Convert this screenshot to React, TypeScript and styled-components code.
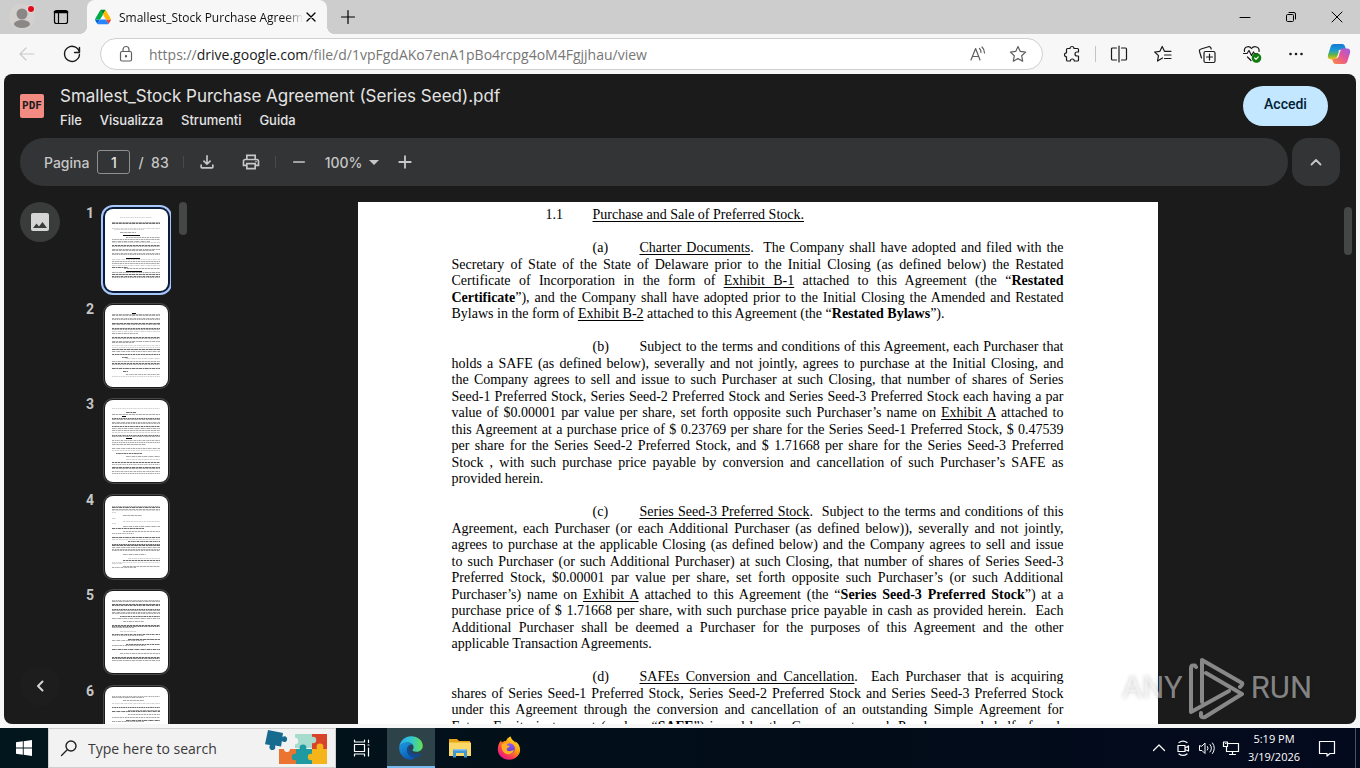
import React from "react";
import styled, { createGlobalStyle, css } from "styled-components";
import { MdOutlineFileDownload, MdOutlinePrint, MdArrowDropDown, MdAdd, MdRemove, MdImage } from "react-icons/md";

const ui = '"Open Sans", "Noto Sans", sans-serif';
const product = 'Inter, Roboto, sans-serif';

const GlobalStyle = createGlobalStyle`
  *, *::before, *::after { box-sizing: border-box; }
  body { margin: 0; background: #f7f7f7; font-family: ${ui}; }
  button { border: 0; padding: 0; background: none; font: inherit; color: inherit; cursor: pointer; }
  a { color: inherit; text-decoration: none; }
`;

const Desktop = styled.div`
  display: flex;
  flex-direction: column;
  height: 100vh;
  overflow: hidden;
  position: relative;
`;

/* ---------- browser chrome ---------- */

const Line = styled.svg`
  display: block;
  flex: none;
  fill: none;
  stroke: currentColor;
  stroke-width: 1.2;
  stroke-linecap: round;
  stroke-linejoin: round;
`;

const TabStrip = styled.header`
  display: flex;
  align-items: stretch;
  height: 34px;
  flex: none;
  background: #cdcdcd;
`;

const StripButton = styled.button<{ $w: number }>`
  display: grid;
  place-items: center;
  width: ${(p) => p.$w}px;
`;

const Tab = styled.div`
  display: flex;
  align-items: center;
  width: 240px;
  margin-left: 10px;
  padding: 0 8px;
  background: #f7f7f7;
  border-radius: 8px 8px 0 0;
  position: relative;
  &::before, &::after {
    content: "";
    position: absolute;
    bottom: 0;
    width: 8px;
    height: 8px;
  }
  &::before { left: -8px; background: radial-gradient(circle at 0 0, transparent 8px, #f7f7f7 8px); }
  &::after { right: -8px; background: radial-gradient(circle at 100% 0, transparent 8px, #f7f7f7 8px); }
`;

const TabTitle = styled.span`
  flex: 1;
  min-width: 0;
  margin-left: 8px;
  overflow: hidden;
  white-space: nowrap;
  font-size: 12px;
  color: #111;
  mask-image: linear-gradient(90deg, #000 90%, transparent);
`;

const WindowButtons = styled.div`
  display: flex;
  margin-left: auto;
`;

const NavBar = styled.nav`
  display: flex;
  align-items: center;
  height: 40px;
  flex: none;
  background: #f7f7f7;
  color: #1a1a1a;
`;

const NavButton = styled.button<{ $w?: number; $dim?: boolean }>`
  display: grid;
  place-items: center;
  width: ${(p) => p.$w ?? 44}px;
  height: 32px;
  color: ${(p) => (p.$dim ? "#c9c9c9" : "inherit")};
`;

const AddressBar = styled.div`
  display: flex;
  align-items: center;
  flex: 1;
  height: 32px;
  margin: 0 6px;
  padding: 0 4px 0 16px;
  border: 1px solid #cfcfcf;
  border-radius: 16px;
  background: #fff;
  color: #5f5f5f;
`;

const Url = styled.a`
  flex: 1;
  margin-left: 14px;
  font-size: 14px;
  color: #767676;
  white-space: nowrap;
  b { font-weight: 400; color: #1a1a1a; }
`;

const Separator = styled.span`
  width: 1px;
  height: 16px;
  background: #c4c4c4;
`;

/* ---------- drive viewer ---------- */

const Viewer = styled.main`
  display: flex;
  flex-direction: column;
  flex: 1;
  min-height: 0;
  margin: 0 4px 4px;
  overflow: hidden;
  border-radius: 8px;
  background: #1b1b1b;
  color: #e3e3e3;
  font-family: ${product};
`;

const ViewerHeader = styled.div`
  display: flex;
  align-items: center;
  height: 64px;
  flex: none;
  padding: 0 28px 0 16px;
`;

const PdfBadge = styled.span`
  display: grid;
  place-items: center;
  width: 24px;
  height: 24px;
  border-radius: 2px;
  background: #f28b82;
  color: #1b1b1b;
  font: 700 11px/24px "DejaVu Sans Mono", monospace;
`;

const TitleBlock = styled.div`
  flex: 1;
  margin-left: 16px;
  padding-top: 4px;
`;

const Title = styled.h1`
  margin: 0;
  font-size: 17px;
  line-height: 24px;
  font-weight: 400;
`;

const Menu = styled.div`
  display: flex;
  gap: 18px;
  height: 24px;
  font-size: 13px;
  font-weight: 500;
  line-height: 24px;
`;

const SignIn = styled.a`
  width: 85px;
  height: 40px;
  border-radius: 20px;
  background: #c2e7ff;
  color: #001d35;
  text-align: center;
  font: 500 14px/37px Roboto, sans-serif;
`;

const ToolRow = styled.div`
  display: flex;
  gap: 4px;
  flex: none;
  padding: 0 16px;
`;

const Tools = styled.div`
  display: flex;
  align-items: center;
  flex: 1;
  height: 48px;
  padding: 0 24px;
  border-radius: 24px;
  background: #333435;
  color: #c7c7c7;
  font-size: 14px;
  font-weight: 500;
`;

const PageField = styled.label`
  display: flex;
  align-items: center;
  gap: 8px;
`;

const PageInput = styled.input`
  width: 33px;
  height: 24px;
  padding: 0;
  border: 1px solid #8e918f;
  border-radius: 3px;
  background: transparent;
  color: #e3e3e3;
  text-align: center;
  font: 500 14px ${product};
`;

const ToolDivider = styled.span`
  width: 1px;
  height: 12px;
  margin: 0 13px 0 14px;
  background: #48494a;
`;

const ToolButton = styled.button<{ $gap?: number }>`
  display: flex;
  align-items: center;
  margin-right: ${(p) => p.$gap ?? 0}px;
`;

const Collapse = styled.button`
  display: grid;
  place-items: center;
  width: 48px;
  height: 48px;
  border-radius: 16px;
  background: #333435;
  color: #c7c7c7;
`;

const Body = styled.div`
  display: flex;
  flex: 1;
  min-height: 0;
  padding-top: 16px;
`;

const Rail = styled.div`
  display: flex;
  flex-direction: column;
  justify-content: space-between;
  width: 56px;
  padding: 0 0 18px 16px;
`;

const RailButton = styled.button<{ $bg: string }>`
  display: grid;
  place-items: center;
  width: 40px;
  height: 40px;
  border-radius: 50%;
  background: ${(p) => p.$bg};
  color: #d5d5d5;
`;

const Thumbs = styled.ol`
  display: grid;
  grid-auto-rows: 96px 95px;
  width: 111px;
  margin: 0;
  padding: 7px 0 0 22px;
  overflow: hidden;
  list-style: none;
`;

const ThumbItem = styled.li`
  display: flex;
  gap: 11px;
`;

const ThumbNumber = styled.span`
  width: 12px;
  text-align: right;
  font: 700 14px/8px Roboto, sans-serif;
  color: #c4c7c5;
`;

const Thumb = styled.button<{ $on: boolean }>`
  width: 63px;
  height: 82px;
  border-radius: 8px;
  overflow: hidden;
  background: #fff;
  ${(p) =>
    p.$on
      ? css`box-shadow: 0 0 0 2px #0a1c3a, 0 0 0 4px #a8c7fa;`
      : css`box-shadow: 0 0 0 1px #1b1b1b, 0 0 0 2px #474747;`}
`;

const ScrollTrack = styled.div<{ $w: number }>`
  width: ${(p) => p.$w}px;
  flex: none;
`;

const ScrollThumb = styled.div<{ $h: number; $top: number }>`
  width: 8px;
  height: ${(p) => p.$h}px;
  margin: ${(p) => p.$top}px auto 0;
  border-radius: 4px;
  background: #454646;
`;

const Canvas = styled.div`
  display: flex;
  justify-content: center;
  flex: 1;
  min-width: 0;
  padding-right: 20px;
  overflow: hidden;
`;

const Sheet = styled.article`
  width: 800px;
  min-height: 100%;
  padding: 4px 94px;
  background: #fff;
  color: #000;
  font: 14px/17px "Liberation Serif", serif;
`;

const Para = styled.p`
  display: grid;
  grid-auto-rows: 17px 16px;
  margin: 0 0 16px;
  u { text-underline-offset: 2px; text-decoration-skip-ink: none; }
`;

const Row = styled.span<{ $last?: boolean }>`
  display: flex;
  white-space: nowrap;
  text-align-last: ${(p) => (p.$last ? "left" : "justify")};
`;

const Marker = styled.span<{ $indent: number }>`
  width: 47px;
  margin-left: ${(p) => p.$indent}px;
  text-align-last: left;
`;

const Words = styled.span`
  flex: 1;
`;

/* ---------- watermark ---------- */

const Watermark = styled.div`
  position: absolute;
  right: 48px;
  bottom: 48px;
  display: flex;
  align-items: center;
  gap: 6px;
  color: rgba(255, 255, 255, 0.48);
  font: 31px/64px Roboto, sans-serif;
  text-shadow: 0 0 4px rgba(0, 0, 0, 0.2);
  pointer-events: none;
`;

/* ---------- taskbar ---------- */

const Taskbar = styled.footer`
  display: flex;
  align-items: stretch;
  height: 40px;
  flex: none;
  background: linear-gradient(90deg, #02161d, #020c18 60%, #030a1e);
  color: #fff;
`;

const Task = styled.button<{ $active?: boolean; $w?: number }>`
  display: grid;
  place-items: center;
  width: ${(p) => p.$w ?? 48}px;
  ${(p) => p.$active && css`background: #2d4249; box-shadow: inset 0 -2px #76b9ed;`}
`;

const Search = styled.label`
  display: flex;
  align-items: center;
  width: 288px;
  padding: 0 6px 0 11px;
  border: 1px solid #cfcfcf;
  background: #f2f2f2;
  color: #222;
`;

const SearchInput = styled.input`
  flex: 1;
  min-width: 0;
  padding: 0 0 0 10px;
  border: 0;
  background: none;
  font: 14px ${ui};
  &::placeholder { color: #3a3a3a; opacity: 1; }
`;

const Tray = styled.div`
  display: flex;
  align-items: center;
  margin-left: auto;
`;

const TrayButton = styled.button<{ $w?: number }>`
  display: grid;
  place-items: center;
  width: ${(p) => p.$w ?? 24}px;
`;

const Clock = styled.time`
  width: 62px;
  text-align: center;
  font-size: 11px;
  line-height: 18px;
`;

const PeekEdge = styled.span`
  width: 5px;
  align-self: stretch;
  margin-left: 6px;
  border-left: 1px solid #4a5061;
`;

/* ---------- data ---------- */

type LineT = React.ReactNode;
interface Clause { id: string; indent: number; open?: boolean; lines: LineT[] }

const clauses: Clause[] = [
  { id: "1.1", indent: 94, lines: [<u>Purchase and Sale of Preferred Stock.</u>] },
  {
    id: "(a)",
    indent: 141,
    lines: [
      <><u>Charter Documents</u>.&nbsp; The Company shall have adopted and filed with the</>,
      "Secretary of State of the State of Delaware prior to the Initial Closing (as defined below) the Restated",
      <>Certificate of Incorporation in the form of <u>Exhibit B-1</u> attached to this Agreement (the “<b>Restated</b></>,
      <><b>Certificate</b>”), and the Company shall have adopted prior to the Initial Closing the Amended and Restated</>,
      <>Bylaws in the form of <u>Exhibit B-2</u> attached to this Agreement (the “<b>Restated Bylaws</b>”).</>,
    ],
  },
  {
    id: "(b)",
    indent: 141,
    lines: [
      "Subject to the terms and conditions of this Agreement, each Purchaser that",
      "holds a SAFE (as defined below), severally and not jointly, agrees to purchase at the Initial Closing, and",
      "the Company agrees to sell and issue to such Purchaser at such Closing, that number of shares of Series",
      "Seed-1 Preferred Stock, Series Seed-2 Preferred Stock and Series Seed-3 Preferred Stock each having a par",
      <>value of $0.00001 par value per share, set forth opposite such Purchaser’s name on <u>Exhibit A</u> attached to</>,
      "this Agreement at a purchase price of $ 0.23769 per share for the Series Seed-1 Preferred Stock, $ 0.47539",
      "per share for the Series Seed-2 Preferred Stock, and $ 1.71668 per share for the Series Seed-3 Preferred",
      "Stock , with such purchase price payable by conversion and cancellation of such Purchaser’s SAFE as",
      "provided herein.",
    ],
  },
  {
    id: "(c)",
    indent: 141,
    lines: [
      <><u>Series Seed-3 Preferred Stock</u>.&nbsp; Subject to the terms and conditions of this</>,
      "Agreement, each Purchaser (or each Additional Purchaser (as defined below)), severally and not jointly,",
      "agrees to purchase at the applicable Closing (as defined below) and the Company agrees to sell and issue",
      "to such Purchaser (or such Additional Purchaser) at such Closing, that number of shares of Series Seed-3",
      "Preferred Stock, $0.00001 par value per share, set forth opposite such Purchaser’s (or such Additional",
      <>Purchaser’s) name on <u>Exhibit A</u> attached to this Agreement (the “<b>Series Seed-3 Preferred Stock</b>”) at a</>,
      <>purchase price of $ 1.71668 per share, with such purchase price payable in cash as provided herein.&nbsp; Each</>,
      "Additional Purchaser shall be deemed a Purchaser for the purposes of this Agreement and the other",
      "applicable Transaction Agreements.",
    ],
  },
  {
    id: "(d)",
    indent: 141,
    open: true,
    lines: [
      <><u>SAFEs Conversion and Cancellation</u>.&nbsp; Each Purchaser that is acquiring</>,
      "shares of Series Seed-1 Preferred Stock, Series Seed-2 Preferred Stock and Series Seed-3 Preferred Stock",
      "under this Agreement through the conversion and cancellation of an outstanding Simple Agreement for",
      <>Future Equity instrument (each, a “<b>SAFE</b>”) issued by the Company to such Purchaser, on behalf of such</>,
    ],
  },
];

/* Each entry: y, x start, x end, weight (1 faint .. 4 solid) */
type Stroke = [number, number, number, number];
const thumbPages: Stroke[][] = [
  [[8,16,48,1],[13,8,56,2],[14,8,56,3],[19,8,56,1],[20,10,40,1],[23,16,32,2],[26,19,36,4],[28,22,56,2],[30,8,56,2],[32,8,46,2],[33,8,56,1],[36,8,56,3],[37,8,56,2],[40,8,56,2],[41,8,50,2],[44,8,56,2],[45,8,56,2],[49,22,36,4],[50,8,56,1],[52,8,56,2],[54,8,56,2],[56,8,56,1],[58,8,24,3],[59,20,56,2],[62,22,38,4],[63,8,56,2],[65,8,56,3],[67,8,56,3],[68,8,56,2]],
  [[8,28,32,4],[9,8,56,2],[10,8,56,2],[13,8,56,2],[14,8,56,2],[18,8,56,3],[19,8,56,2],[23,8,56,3],[24,8,56,2],[26,8,56,1],[28,8,34,2],[32,8,56,3],[33,8,56,2],[36,8,56,2],[37,8,30,2],[40,8,56,1],[42,8,56,1],[44,8,56,3],[46,8,56,2],[49,8,56,3],[52,18,24,3],[53,22,56,1],[56,8,56,2],[58,8,56,3],[59,8,56,2],[63,8,56,3],[66,19,24,3],[69,22,56,2],[71,8,56,1]],
  [[8,8,56,1],[12,22,32,3],[14,8,56,2],[16,18,22,4],[18,8,56,3],[19,8,56,2],[22,8,56,2],[23,8,56,2],[26,8,56,3],[28,8,56,2],[30,8,56,2],[32,8,56,1],[35,8,56,3],[36,8,56,2],[38,22,28,4],[40,8,56,2],[42,8,56,2],[44,8,42,2],[48,8,56,2],[50,8,56,1],[53,12,38,3],[56,22,56,2],[59,22,56,1],[62,8,56,3],[64,8,56,2],[67,8,56,3],[68,8,56,2],[71,8,56,2],[73,8,56,2]],
  [[10,8,56,2],[11,8,56,3],[13,8,56,2],[14,8,56,1],[16,8,12,1],[19,19,38,2],[22,8,12,1],[25,19,56,1],[27,8,12,1],[30,19,56,2],[32,8,40,3],[35,19,56,2],[37,8,30,2],[41,8,56,3],[43,8,56,1],[45,24,56,3],[48,8,56,3],[49,8,56,3],[51,8,56,2],[53,8,56,2],[54,8,56,2],[58,19,42,2],[62,24,56,1],[64,19,56,3],[66,8,56,1],[67,8,18,1],[70,19,56,2],[71,8,32,2]],
  [[9,8,56,2],[10,8,56,2],[13,8,56,3],[14,8,56,3],[18,8,56,3],[19,8,56,2],[21,8,56,2],[22,8,56,2],[25,16,56,3],[27,8,56,2],[30,19,40,2],[34,8,56,3],[35,8,56,3],[36,8,30,2],[40,16,32,1],[43,8,56,3],[44,8,40,2],[48,24,56,3],[49,8,40,2],[53,22,56,3],[54,8,42,2],[58,8,56,3],[62,16,56,2],[66,8,56,3],[67,8,56,3],[69,8,56,2]],
  [[9,8,56,2],[10,8,40,2],[13,19,40,2],[16,8,56,1],[20,8,56,3],[23,24,56,2],[24,8,56,3],[27,24,56,2],[30,8,56,2],[33,22,56,3],[34,8,40,2],[38,8,56,2]],
];
const inks = ["", "#d0d0d0", "#a8a8a8", "#6e6e6e", "#0a0a0a"];

function ThumbPage({ strokes }: { strokes: Stroke[] }) {
  return (
    <svg width="63" height="82" viewBox="0 0 63 82" fill="none" aria-hidden="true">
      {strokes.map(([y, a, b, w], i) => (
        <path
          key={i}
          d={`M${a - 1} ${y + 0.5}H${b - 1}`}
          stroke={inks[w]}
          strokeWidth="1"
          strokeDasharray={w === 4 ? undefined : `${1.6 + ((i * 3) % 4) * 0.7} .6 ${1 + (i % 3) * 0.8} .5`}
        />
      ))}
    </svg>
  );
}

/* ---------- drawings ---------- */

const DriveLogo = () => (
  <svg width="16" height="16" viewBox="0 0 87.3 78" aria-hidden="true">
    <path fill="#0066da" d="m6.6 66.85 3.85 6.65c.8 1.4 1.95 2.5 3.3 3.3l13.75-23.8h-27.5c0 1.55.4 3.1 1.2 4.5z" />
    <path fill="#00ac47" d="m43.65 25-13.75-23.8c-1.35.8-2.5 1.9-3.3 3.3l-25.4 44a9.06 9.06 0 0 0 -1.2 4.5h27.5z" />
    <path fill="#ea4335" d="m73.55 76.8c1.35-.8 2.5-1.9 3.3-3.3l1.6-2.75 7.65-13.25c.8-1.4 1.2-2.95 1.2-4.5h-27.5l5.85 11.5z" />
    <path fill="#00832d" d="m43.65 25 13.75-23.8c-1.35-.8-2.9-1.2-4.5-1.2h-18.5c-1.6 0-3.15.45-4.5 1.2z" />
    <path fill="#2684fc" d="m59.8 53h-32.3l-13.75 23.8c1.35.8 2.9 1.2 4.5 1.2h50.8c1.6 0 3.15-.45 4.5-1.2z" />
    <path fill="#ffba00" d="m73.4 26.5-12.7-22c-.8-1.4-1.95-2.5-3.3-3.3l-13.75 23.8 16.15 28h27.45c0-1.55-.4-3.1-1.2-4.5z" />
  </svg>
);

const CopilotLogo = () => (
  <svg width="24" height="24" viewBox="0 0 24 24" aria-hidden="true">
    <defs>
      <linearGradient id="cpA" x1="0" y1="0" x2="0" y2="1">
        <stop offset="0" stopColor="#1478d4" /><stop offset=".4" stopColor="#1b9ad6" /><stop offset=".7" stopColor="#5fb548" /><stop offset="1" stopColor="#f5c518" />
      </linearGradient>
      <linearGradient id="cpB" x1="1" y1="0" x2="0" y2="1">
        <stop offset="0" stopColor="#9b5be8" /><stop offset=".45" stopColor="#e2559a" /><stop offset="1" stopColor="#ff8a3c" />
      </linearGradient>
    </defs>
    <path fill="url(#cpA)" d="M7 2h8.200c1.600 0 2.300.9 2.800 2.400L18.900 7h-3.300c-1.600 0-2.200.9-2.600 2.300L11.300 15c-.5 1.600-1.300 2.400-2.900 2.400H4C1.400 17.400.3 15.600 1 13L3.600 4.700C4.200 2.900 5.200 2 7 2z" />
    <path fill="url(#cpB)" d="M17 22H8.800c-1.600 0-2.300-.9-2.800-2.400L5.100 17h3.300c1.600 0 2.200-.9 2.600-2.300L12.700 9c.5-1.600 1.300-2.400 2.900-2.400H20c2.600 0 3.700 1.800 3 4.400l-2.600 8.300c-.6 1.800-1.600 2.700-3.400 2.700z" />
    <path fill="#fff" d="M11.300 8.300h3c-.9.5-1.300 1.300-1.600 2.300l-1.300 4.100c-.2.700-.5 1-1 1H9.200c.7-.5 1-1 1.200-1.700l1.200-3.600c.3-1.100.2-1.700-.3-2.100z" />
  </svg>
);

const EdgeLogo = () => (
  <svg width="24" height="24" viewBox="0 0 24 24" aria-hidden="true">
    <defs>
      <linearGradient id="edA" x1="0" y1=".3" x2="1" y2=".3">
        <stop offset="0" stopColor="#2aa8ee" /><stop offset=".5" stopColor="#30c6d3" /><stop offset="1" stopColor="#66e04e" />
      </linearGradient>
      <linearGradient id="edB" x1="0" y1="0" x2=".6" y2="1">
        <stop offset="0" stopColor="#1b9de2" /><stop offset="1" stopColor="#0c58b4" />
      </linearGradient>
    </defs>
    <path fill="url(#edA)" d="M.2 11C1 4.700 6 .2 12.200.2c6.800 0 11.600 4.600 11.600 9.600 0 3.500-2.700 6-6.100 6-2.700 0-4.200-.8-4.200-1.700 0-.6 1.100-1 1.100-2.900 0-2.700-2.900-4.700-6.400-4.700C4.700 6.500 1.600 8.100.2 11z" />
    <path fill="url(#edB)" d="M.2 11.200C1.500 8 4.700 6.500 8.200 6.500c2.600 0 4.600.9 5.600 2.200-3.200-.6-5.700 1.900-5.700 5.400 0 4.900 4.400 8 8.600 7.500-1.400 1.200-3.200 1.900-5.200 2.100C5 23.500.2 18.200.2 12z" />
    <path fill="#0f4a92" d="M8.100 13.800c0-2.100 1-3.900 2.600-4.800-1.200 4.500 1.500 9.300 6.800 9.300 1.800 0 3.300-.4 4.500-1.100.4-.2.700.2.500.6-1.400 2.400-3.500 3.900-5.800 4-4.600.2-8.600-3.200-8.600-8z" />
  </svg>
);

const FolderLogo = () => (
  <svg width="22" height="20" viewBox="0 0 22 20" aria-hidden="true">
    <path fill="#e8a317" d="M0 1h8l2 2h11v5H0z" />
    <path fill="#fbd867" d="M0 4.500h22V18H0z" />
    <path fill="#3f97d8" d="M4 19.500v-7c0-1 .6-1.500 1.500-1.500h11c.9 0 1.500.5 1.500 1.500v7h-3V15H7v4.500z" />
    <path fill="#8ac6ef" d="M5.500 11h11l1.300 1.500H4.200z" />
  </svg>
);

const FirefoxLogo = () => (
  <svg width="24" height="24" viewBox="0 0 24 24" aria-hidden="true">
    <defs>
      <linearGradient id="ffA" x1=".85" y1=".1" x2=".2" y2=".95">
        <stop offset="0" stopColor="#ffe226" /><stop offset=".4" stopColor="#ff980e" /><stop offset=".7" stopColor="#ff4050" /><stop offset="1" stopColor="#e31587" />
      </linearGradient>
      <linearGradient id="ffB" x1="0" y1="0" x2="0" y2="1">
        <stop offset="0" stopColor="#9059ff" /><stop offset="1" stopColor="#5b3bc4" />
      </linearGradient>
    </defs>
    <path fill="url(#ffA)" d="M13.800.5c.3 2 1.300 3.300 3 4.600.9.700 1.400 1.300 1.700 2.200 0-.8-.1-1.400-.4-2.100 3.100 1.700 5 5 5 8.500 0 5.600-4.800 10-11 10C5.700 23.700.8 19.300.8 13.200.8 9.900 2 7 4.200 4.300c0 1 .1 1.600.5 2.300C6 5.400 7.500 4.900 9 5c1-2.400 2.500-3.900 4.800-4.500z" />
    <circle cx="12.500" cy="12.600" r="5.400" fill="url(#ffB)" />
    <path fill="#ffb020" d="M4.500 9c2-2.200 5-2.400 7.500-1.200-1.400 0-2 .6-2.400 1.300 1 .8 2.600.5 3.300.9-.5 1.600-3 1.600-3.200 2.900-.2 1 .8 2.300 2.600 2.300 2 0 3-1.400 4.600-.8-1 2.700-3.300 4-6 3.800C7 18 4.200 14.500 4.500 9z" />
  </svg>
);

const PuzzleArt = () => (
  <svg width="64" height="36" viewBox="0 0 64 36" aria-hidden="true">
    <path fill="#a6dccd" d="M30 4h17v14H30z" />
    <path fill="#d9432a" d="M47 4h15v15H47z" />
    <path fill="#ea7430" d="M14 19h17v15H14z" />
    <path fill="#1f9aa0" d="M31 19h16v15H31z" />
    <path fill="#f4b41a" d="M47 19h15v15H47z" />
    <circle cx="30" cy="11" r="3.200" fill="#f2f2f2" />
    <circle cx="38" cy="18" r="3.400" fill="#1f9aa0" />
    <circle cx="48" cy="10" r="3.200" fill="#a6dccd" />
    <circle cx="55" cy="17" r="3.400" fill="#f4b41a" />
    <circle cx="30" cy="27" r="3.200" fill="#1f9aa0" />
    <circle cx="46" cy="27" r="3.200" fill="#f4b41a" />
    <circle cx="22" cy="19" r="3" fill="#f2f2f2" />
    <path fill="#176b8f" d="m3 0 15 3-.6 4c2.800-1.800 5.200.2 4.700 2.800-.5 2.500-3.300 3-5.200 1.300l-.8 5.400-6.200-.9c1.200 2.500-.3 4.700-2.700 4.500-2.500-.2-3.500-2.800-2.200-5.100L0 14.300z" />
  </svg>
);

const LinePath = ({ d, s = 20, w = 1.2 }: { d: string; s?: number; w?: number }) => (
  <Line width={s} height={s} viewBox={`0 0 ${s} ${s}`} aria-hidden="true">
    <g strokeWidth={w}><path d={d} /></g>
  </Line>
);

export default function App() {
  return (
    <Desktop>
      <GlobalStyle />
      <TabStrip>
        <StripButton $w={44} aria-label="Profile">
          <svg width="28" height="28" viewBox="0 0 28 28">
            <circle cx="14" cy="14" r="13" fill="#d3d1d0" />
            <circle cx="14" cy="11" r="5.500" fill="#8b8784" />
            <ellipse cx="14" cy="21" rx="8" ry="4" fill="#8b8784" />
            <circle cx="23" cy="6" r="4" fill="#e3d6d6" />
            <circle cx="23" cy="6" r="3" fill="#e00b1c" />
          </svg>
        </StripButton>
        <StripButton $w={33} aria-label="Tab actions">
          <Line width="32" height="20" viewBox="0 0 32 20">
            <rect x="9.500" y="3.500" width="13" height="13" rx="2" />
            <path d="M10 5h12" strokeWidth="2.600" />
            <path d="M13.500 6v10" />
          </Line>
        </StripButton>
        <Tab>
          <DriveLogo />
          <TabTitle>Smallest_Stock Purchase Agreement (Series Seed).pdf</TabTitle>
          <StripButton $w={16} aria-label="Close tab"><LinePath s={10} d="M1 1l8 8M9 1l-8 8" w={1.3} /></StripButton>
        </Tab>
        <StripButton $w={42} aria-label="New tab"><LinePath s={16} d="M1.500 8h13M8 1.500v13" /></StripButton>
        <WindowButtons>
          <StripButton $w={46} aria-label="Minimize"><LinePath s={12} d="M1 6.500h10" w={1} /></StripButton>
          <StripButton $w={46} aria-label="Restore"><LinePath s={12} d="M1.500 4.500a1 1 0 0 1 1-1h5a1 1 0 0 1 1 1v5a1 1 0 0 1-1 1h-5a1 1 0 0 1-1-1zM4 1.500h5a1.500 1.500 0 0 1 1.500 1.500v5" w={1} /></StripButton>
          <StripButton $w={46} aria-label="Close"><LinePath s={12} d="M1 1l10 10M11 1L1 11" w={1} /></StripButton>
        </WindowButtons>
      </TabStrip>

      <NavBar>
        <NavButton $w={50} $dim aria-label="Back"><LinePath d="M19 10H5M11 4l-6 6 6 6" /></NavButton>
        <NavButton aria-label="Reload"><LinePath d="M17.400 8.500A7.500 7.500 0 1 0 17.500 10.500M17.500 3.500v5h-5" w={1.4} /></NavButton>
        <AddressBar>
          <Line width="18" height="20" viewBox="0 0 18 20">
            <rect x="3.500" y="7.500" width="11" height="9.500" rx="1.500" />
            <path d="M6 7.500V5.500a3 3 0 0 1 6 0v2" />
            <circle cx="9" cy="12.200" r=".6" fill="currentColor" />
          </Line>
          <Url href="#">https://<b>drive.google.com</b>/file/d/1vpFgdAKo7enA1pBo4rcpg4oM4Fgjjhau/view</Url>
          <NavButton $w={40} aria-label="Read aloud"><LinePath d="M3 16L7.600 4.500 12 16M4.500 12.500h6M11.500 4.500a5 5 0 0 1 1.500 4M14 3a8 8 0 0 1 2.500 6" /></NavButton>
          <NavButton $w={40} aria-label="Add to favourites"><LinePath d="M10 2.500l2.300 4.900 5.300.7-3.900 3.700 1 5.400L10 14.600l-4.700 2.600 1-5.400L2.400 8.100l5.300-.7z" /></NavButton>
        </AddressBar>
        <NavButton $w={46} aria-label="Extensions"><LinePath d="M4.500 5.500a1 1 0 0 1 1-1H8a2 2 0 1 1 4 0h3.500a1 1 0 0 1 1 1V8H15a2 2 0 1 0 0 4h1.500v4a1 1 0 0 1-1 1h-3.200a2 2 0 0 0-4 0H5.500a1 1 0 0 1-1-1v-3.200a2 2 0 1 1 0-4z" /></NavButton>
        <Separator />
        <NavButton $w={46} aria-label="Split screen"><LinePath d="M10 2v16M7.500 4h-4A1 1 0 0 0 2.500 5v10a1 1 0 0 0 1 1h4M12.500 4h4a1 1 0 0 1 1 1v10a1 1 0 0 1-1 1h-4" /></NavButton>
        <NavButton $w={42} aria-label="Favourites"><LinePath d="M9.500 14l-5 3 1-5.400L1.700 8l5.200-.7L9.200 2.500l2.300 4.800h6.500M11.500 11H18M11.500 14.500H18" /></NavButton>
        <NavButton $w={46} aria-label="Collections"><LinePath d="M8.500 18.500A1.500 1.500 0 0 1 7 17V9A1.500 1.500 0 0 1 8.500 7.500H16.500A1.500 1.500 0 0 1 18 9v8a1.500 1.500 0 0 1-1.500 1.500zM12.500 10v6M9.500 13h6M4.500 14L2.500 7.500A2 2 0 0 1 4 5l7.500-2.300a2 2 0 0 1 2.400 1.300l.3 1" /></NavButton>
        <NavButton aria-label="Browser essentials">
          <Line width="20" height="20" viewBox="0 0 20 20">
            <path d="M9 16.500L5.500 13M2.500 7.500C1.500 3 7 1 9.500 4.500 12 1 18 3 17 7.500M1.500 9.500H5L7 6.500l2.500 5L11.500 8l1 1.500h3" />
            <circle cx="14.500" cy="14" r="4.200" fill="#107c10" stroke="#107c10" />
            <path d="M12.700 14l1.300 1.300 2.300-2.400" stroke="#fff" />
          </Line>
        </NavButton>
        <NavButton aria-label="Settings and more">
          <svg width="20" height="20" viewBox="0 0 20 20" fill="currentColor"><circle cx="4.500" cy="10" r="1.300" /><circle cx="10" cy="10" r="1.300" /><circle cx="15.500" cy="10" r="1.300" /></svg>
        </NavButton>
        <NavButton $w={42} aria-label="Copilot"><CopilotLogo /></NavButton>
      </NavBar>

      <Viewer>
        <ViewerHeader>
          <PdfBadge>PDF</PdfBadge>
          <TitleBlock>
            <Title>Smallest_Stock Purchase Agreement (Series Seed).pdf</Title>
            <Menu>
              <button>File</button>
              <button>Visualizza</button>
              <button>Strumenti</button>
              <button>Guida</button>
            </Menu>
          </TitleBlock>
          <SignIn href="#">Accedi</SignIn>
        </ViewerHeader>

        <ToolRow>
          <Tools>
            <PageField>
              Pagina
              <PageInput defaultValue="1" />
              <span>/&nbsp; 83</span>
            </PageField>
            <ToolDivider />
            <ToolButton $gap={24} aria-label="Download"><MdOutlineFileDownload size={20} /></ToolButton>
            <ToolButton aria-label="Print"><MdOutlinePrint size={20} /></ToolButton>
            <ToolDivider />
            <ToolButton $gap={16} aria-label="Zoom out"><MdRemove size={20} /></ToolButton>
            <ToolButton $gap={8}>100% <MdArrowDropDown size={24} /></ToolButton>
            <ToolButton aria-label="Zoom in"><MdAdd size={22} /></ToolButton>
          </Tools>
          <Collapse aria-label="Hide controls"><LinePath s={12} d="M1.500 8.500L6 4l4.500 4.500" w={1.8} /></Collapse>
        </ToolRow>

        <Body>
          <Rail>
            <RailButton $bg="#3a3b3b" aria-label="Thumbnails"><MdImage size={24} /></RailButton>
            <RailButton $bg="#1d1d1d" aria-label="Hide sidebar"><LinePath s={12} d="M8.500 1.500L4 6l4.500 4.500" w={2} /></RailButton>
          </Rail>
          <Thumbs>
            {thumbPages.map((strokes, i) => (
              <ThumbItem key={i}>
                <ThumbNumber>{i + 1}</ThumbNumber>
                <Thumb $on={i === 0} aria-label={`Page ${i + 1}`}><ThumbPage strokes={strokes} /></Thumb>
              </ThumbItem>
            ))}
          </Thumbs>
          <ScrollTrack $w={24}><ScrollThumb $h={33} $top={0} /></ScrollTrack>
          <Canvas>
            <Sheet>
              {clauses.map((c) => (
                <Para key={c.id}>
                  {c.lines.map((line, i) => (
                    <Row key={i} $last={!c.open && i === c.lines.length - 1}>
                      {i === 0 && <Marker $indent={c.indent}>{c.id}</Marker>}
                      <Words>{line}</Words>
                    </Row>
                  ))}
                </Para>
              ))}
            </Sheet>
          </Canvas>
          <ScrollTrack $w={16}><ScrollThumb $h={48} $top={5} /></ScrollTrack>
        </Body>
      </Viewer>

      <Watermark>
        <span>ANY</span>
        <svg width="56" height="64" viewBox="0 0 56 64" fill="none" stroke="currentColor" strokeWidth="4" strokeLinejoin="round" strokeLinecap="round">
          <path d="M7 11l-1-1.500H4Q2 9.500 2 12V56L40 35M13 46V4l40 23q1 2-2 4M12 57v3q1 2 4 1L53 38 17 17" />
        </svg>
        <span>RUN</span>
      </Watermark>

      <Taskbar>
        <Task aria-label="Start">
          <svg width="16" height="16" viewBox="0 0 16 16" fill="#fff"><path d="M0 2.300l6.800-1v6.300H0zM7.700 1.200L16 0v7.600H7.700zM0 8.400h6.800v6.300L0 13.700zM7.700 8.400H16V16l-8.300-1.200z" /></svg>
        </Task>
        <Search>
          <LinePath s={18} d="M1.500 16.500l5.500-5.500M16 7a5 5 0 1 1-10 0 5 5 0 0 1 10 0z" w={1.4} />
          <SearchInput placeholder="Type here to search" aria-label="Search" />
          <PuzzleArt />
        </Search>
        <Task $w={51} aria-label="Task view">
          <LinePath s={18} d="M1.500 1v2h10V1M1.500 5.500h10v7h-10zM1.500 17v-2h10v2M15.500 1v2.500M15.500 9v8M15 6h1" />
        </Task>
        <Task $active aria-label="Microsoft Edge"><EdgeLogo /></Task>
        <Task $w={49} aria-label="File Explorer"><FolderLogo /></Task>
        <Task $w={49} aria-label="Firefox"><FirefoxLogo /></Task>
        <Tray>
          <TrayButton aria-label="Show hidden icons"><LinePath s={14} d="M1.500 9.500L7 4l5.500 5.500" /></TrayButton>
          <TrayButton aria-label="Meet now"><LinePath s={18} d="M5 3.500a7 7 0 0 1 8 0M5 15a7 7 0 0 0 8 0M4 6.500h7v6H4zM11 9l3.500-2v5L11 10.500" /></TrayButton>
          <TrayButton aria-label="Volume"><LinePath s={18} d="M1.500 7v4.500h2.500L7 14.500V4L4 7zM9.500 7.500a3 3 0 0 1 0 3.500M12 5.500a6 6 0 0 1 0 7.500M14.500 4a9 9 0 0 1 0 10.500" w={1} /></TrayButton>
          <TrayButton aria-label="Network"><LinePath s={18} d="M6.500 4.500h10v8H4.500V8M10.500 12.500v3M7.500 15.500h6M1.500 3h4v4.500h-4zM3.500 4.500h.5" /></TrayButton>
          <Clock>5:19 PM<br />3/19/2026</Clock>
          <TrayButton $w={44} aria-label="Notifications"><LinePath s={18} d="M1.500 2.500h15v12H12l-3 2.500v-2.500H1.500z" /></TrayButton>
          <PeekEdge />
        </Tray>
      </Taskbar>
    </Desktop>
  );
}
